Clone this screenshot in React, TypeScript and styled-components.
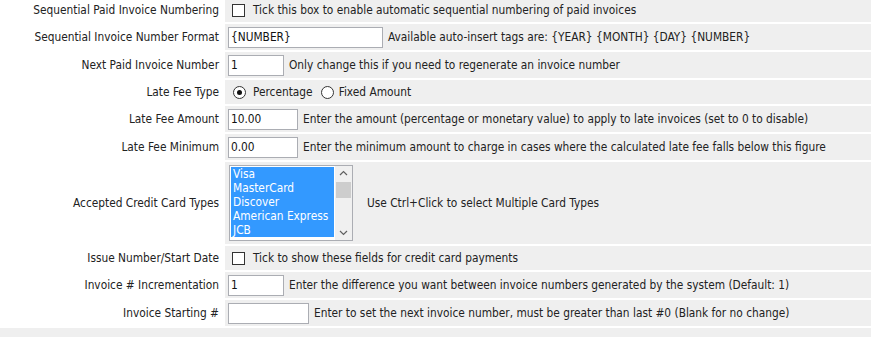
import React from "react";
import styled, { createGlobalStyle } from "styled-components";

const GlobalStyle = createGlobalStyle`
  html, body {
    margin: 0;
    padding: 0;
    background: #ffffff;
  }
  body {
    font-family: Tahoma, "DejaVu Sans Condensed", "Liberation Sans", Arial, sans-serif;
    font-size: 11.8px;
    color: #222;
  }
`;

const Page = styled.div`
  width: 871px;
  height: 337px;
  overflow: hidden;
  background: #fff;
`;

const FormGrid = styled.div`
  display: grid;
  grid-template-columns: 223px 1fr;
  gap: 2px;
  margin-top: -2px;
`;

const Label = styled.div`
  display: flex;
  align-items: center;
  justify-content: flex-end;
  padding-right: 4px;
  background: #fff;
  white-space: nowrap;
`;

const Field = styled.div<{ $h: number }>`
  display: flex;
  align-items: center;
  min-height: ${(p) => p.$h}px;
  padding: 0 3px;
  background: #efefef;
  white-space: nowrap;
`;

const TextInput = styled.input<{ $w: number }>`
  box-sizing: border-box;
  width: ${(p) => p.$w}px;
  height: 21px;
  margin: 0;
  padding: 0 2px;
  border: 1px solid #abadb3;
  background: #fff;
  font-family: inherit;
  font-size: inherit;
  color: #111;
  outline: none;
`;

const Hint = styled.span<{ $gap?: number }>`
  margin-left: ${(p) => p.$gap ?? 5}px;
`;

const CheckBox = styled.span`
  box-sizing: border-box;
  display: inline-block;
  width: 13px;
  height: 13px;
  margin-left: 4px;
  border: 1px solid #333;
  background: #fff;
`;

const RadioOuter = styled.span<{ $ml: number }>`
  box-sizing: border-box;
  display: inline-flex;
  align-items: center;
  justify-content: center;
  width: 13px;
  height: 13px;
  margin-left: ${(p) => p.$ml}px;
  border: 1px solid #333;
  border-radius: 50%;
  background: #fff;
`;

const RadioDot = styled.span`
  width: 5px;
  height: 5px;
  border-radius: 50%;
  background: #111;
`;

const ListBox = styled.div`
  box-sizing: border-box;
  display: flex;
  width: 124px;
  height: 76px;
  margin-left: 1px;
  border: 1px solid #abadb3;
  background: #fff;
`;

const Options = styled.div`
  flex: 1;
  padding: 1px 0 1px 1px;
  display: flex;
  flex-direction: column;
  overflow: hidden;
`;

const OptionItem = styled.div`
  height: 14px;
  line-height: 14px;
  padding-left: 2px;
  background: #3399ff;
  color: #fff;
  white-space: nowrap;
  overflow: hidden;
  flex-shrink: 0;
`;

const ScrollBar = styled.div`
  width: 17px;
  display: flex;
  flex-direction: column;
  align-items: center;
  background: #f0f0f0;
  border-left: 1px solid #fff;
`;

const ArrowBox = styled.div`
  height: 14px;
  width: 17px;
  display: flex;
  align-items: center;
  justify-content: center;
`;

const Thumb = styled.div`
  width: 15px;
  height: 16px;
  margin-top: 2px;
  background: #cdcdcd;
`;

const Spacer = styled.div`
  flex: 1;
`;

const Footer = styled.div`
  height: 12px;
  margin-top: 2px;
  background: #efefef;
`;

const Chevron = ({ up }: { up?: boolean }) => (
  <svg width="9" height="6" viewBox="0 0 9 6">
    <path
      d={up ? "M1 5 L4.5 1.5 L8 5" : "M1 1 L4.5 4.5 L8 1"}
      fill="none"
      stroke="#606060"
      strokeWidth="1.2"
    />
  </svg>
);

const cards = ["Visa", "MasterCard", "Discover", "American Express", "JCB"];

export default function App() {
  return (
    <Page>
      <GlobalStyle />
      <FormGrid>
        <Label>Sequential Paid Invoice Numbering</Label>
        <Field $h={24}>
          <CheckBox />
          <Hint $gap={8}>Tick this box to enable automatic sequential numbering of paid invoices</Hint>
        </Field>

        <Label>Sequential Invoice Number Format</Label>
        <Field $h={26}>
          <TextInput $w={155} defaultValue="{NUMBER}" />
          <Hint>Available auto-insert tags are: {"{YEAR} {MONTH} {DAY} {NUMBER}"}</Hint>
        </Field>

        <Label>Next Paid Invoice Number</Label>
        <Field $h={26}>
          <TextInput $w={56} defaultValue="1" />
          <Hint>Only change this if you need to regenerate an invoice number</Hint>
        </Field>

        <Label>Late Fee Type</Label>
        <Field $h={24}>
          <RadioOuter $ml={5}>
            <RadioDot />
          </RadioOuter>
          <Hint $gap={7}>Percentage</Hint>
          <RadioOuter $ml={8} />
          <Hint $gap={5}>Fixed Amount</Hint>
        </Field>

        <Label>Late Fee Amount</Label>
        <Field $h={26}>
          <TextInput $w={70} defaultValue="10.00" />
          <Hint>Enter the amount (percentage or monetary value) to apply to late invoices (set to 0 to disable)</Hint>
        </Field>

        <Label>Late Fee Minimum</Label>
        <Field $h={26}>
          <TextInput $w={70} defaultValue="0.00" />
          <Hint>Enter the minimum amount to charge in cases where the calculated late fee falls below this figure</Hint>
        </Field>

        <Label>Accepted Credit Card Types</Label>
        <Field $h={82}>
          <ListBox>
            <Options>
              {cards.map((c) => (
                <OptionItem key={c}>{c}</OptionItem>
              ))}
            </Options>
            <ScrollBar>
              <ArrowBox>
                <Chevron up />
              </ArrowBox>
              <Thumb />
              <Spacer />
              <ArrowBox>
                <Chevron />
              </ArrowBox>
            </ScrollBar>
          </ListBox>
          <Hint $gap={14}>Use Ctrl+Click to select Multiple Card Types</Hint>
        </Field>

        <Label>Issue Number/Start Date</Label>
        <Field $h={24}>
          <CheckBox />
          <Hint $gap={8}>Tick to show these fields for credit card payments</Hint>
        </Field>

        <Label>Invoice # Incrementation</Label>
        <Field $h={26}>
          <TextInput $w={56} defaultValue="1" />
          <Hint>Enter the difference you want between invoice numbers generated by the system (Default: 1)</Hint>
        </Field>

        <Label>Invoice Starting #</Label>
        <Field $h={26}>
          <TextInput $w={81} defaultValue="" />
          <Hint>Enter to set the next invoice number, must be greater than last #0 (Blank for no change)</Hint>
        </Field>
      </FormGrid>
      <Footer />
    </Page>
  );
}
